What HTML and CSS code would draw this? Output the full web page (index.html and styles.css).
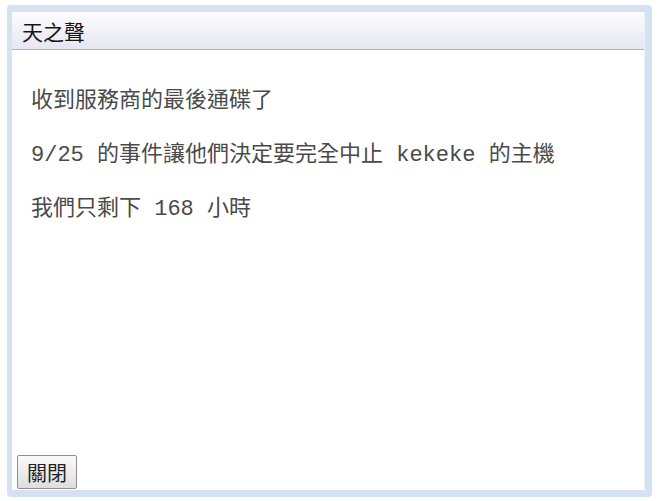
FILE: index.html
```html
<!DOCTYPE html>
<html lang="zh-Hant">
<head>
    <meta charset="UTF-8">
    <meta name="viewport" content="width=device-width, initial-scale=1.0">
    <title>天之聲</title>
    <link rel="stylesheet" href="styles.css">
</head>
<body>
    <div class="dialog">
        <div class="panel">
            <div class="title-bar">天之聲</div>
            <div class="content">
                <p>收到服務商的最後通碟了</p>
                <p>9/25 的事件讓他們決定要完全中止 kekeke 的主機</p>
                <p>我們只剩下 168 小時</p>
            </div>
            <div class="footer">
                <button class="button">關閉</button>
            </div>
        </div>
    </div>
</body>
</html>
```

FILE: styles.css
```css
body {
    margin: 0;
    background-color: white;
    font-family: "Liberation Mono", "Noto Sans CJK TC", monospace;
}
.dialog {
    margin: 5px 0 0 7px;
    width: 633px;
    height: 478px;
    padding: 7px 7px 7px 5px;
    background-color: #d5e2f1;
    border-radius: 4px;
}
.panel {
    display: flex;
    flex-direction: column;
    height: 100%;
    background: white;
    border-right: 1px solid #eef3fa;
    box-sizing: border-box;
}
.title-bar {
    height: 37px;
    line-height: 39px;
    padding-left: 10px;
    font-family: "Noto Sans CJK TC", sans-serif;
    font-size: 21px;
    color: #151515;
    background: linear-gradient(#fdfdfe, #e5e6f1);
    border-bottom: 1px solid #b4b6be;
}
.content {
    flex: 1;
    padding: 37px 0 0 19px;
    font-size: 22px;
    color: #4a4a4a;
}
.content p {
    margin: 0 0 24px;
    line-height: 30px;
    white-space: pre;
}
.footer {
    padding: 0 0 1px 5px;
}
.button {
    width: 60px;
    height: 34px;
    padding: 0;
    font-family: "Noto Sans CJK TC", sans-serif;
    font-size: 20px;
    color: #222;
    background: linear-gradient(#fafafa, #dedede);
    border: 1px solid #8e8e8e;
    border-radius: 2px;
}
```
